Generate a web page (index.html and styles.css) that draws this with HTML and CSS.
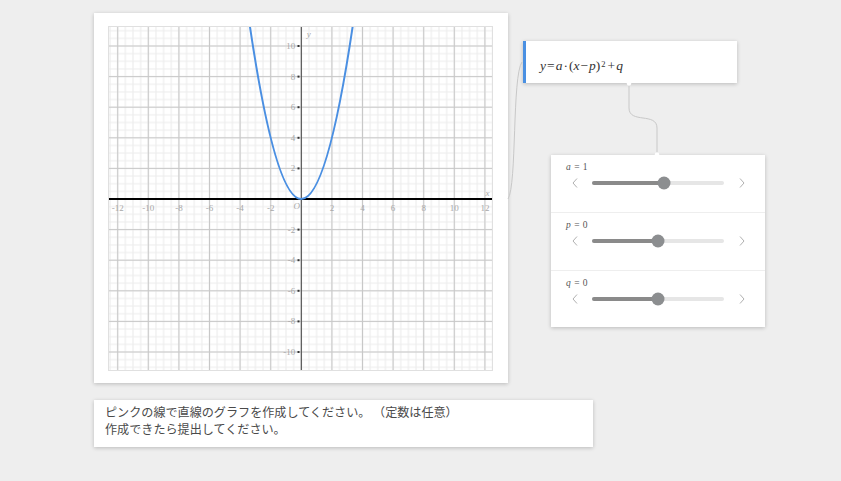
FILE: index.html
```html
<!DOCTYPE html>
<html lang="ja">
<head>
<meta charset="utf-8">
<title>Graph</title>
<link rel="stylesheet" href="styles.css">
</head>
<body>
<div class="page">
  <div class="card graph-card">
    <svg class="graph" width="385" height="345" viewBox="0 0 385 345">
      <defs>
        <pattern id="minor" patternUnits="userSpaceOnUse" x="-0.25" y="-0.25" width="0.5" height="0.5">
          <path d="M0.25 0V0.5M0 0.25H0.5" stroke="#ececec" stroke-width="0.07" fill="none"/>
        </pattern>
        <pattern id="major" patternUnits="userSpaceOnUse" x="-1" y="-1" width="2" height="2">
          <path d="M1 0V2M0 1H2" stroke="#c8c8c8" stroke-width="0.07" fill="none"/>
        </pattern>
      </defs>
      <g transform="translate(193.3 173) scale(15.3 -15.3)">
        <rect x="-13" y="-12" width="26" height="24" fill="url(#minor)"/>
        <rect x="-13" y="-12" width="26" height="24" fill="url(#major)"/>
      </g>
      <line x1="193.3" y1="0" x2="193.3" y2="345" stroke="#444" stroke-width="1"/>
      <line x1="0" y1="173" x2="385" y2="173" stroke="#000" stroke-width="2"/>
      <g fill="#333">
        <rect x="189.5" y="19" width="2" height="2"/>
        <rect x="189.5" y="49.6" width="2" height="2"/>
        <rect x="189.5" y="80.2" width="2" height="2"/>
        <rect x="189.5" y="110.8" width="2" height="2"/>
        <rect x="189.5" y="141.4" width="2" height="2"/>
        <rect x="189.5" y="202.6" width="2" height="2"/>
        <rect x="189.5" y="233.2" width="2" height="2"/>
        <rect x="189.5" y="263.8" width="2" height="2"/>
        <rect x="189.5" y="294.4" width="2" height="2"/>
        <rect x="189.5" y="325" width="2" height="2"/>
      </g>
      <g class="ticks" text-anchor="middle">
        <text x="9.7" y="184.5">-12</text>
        <text x="40.3" y="184.5">-10</text>
        <text x="70.9" y="184.5">-8</text>
        <text x="101.5" y="184.5">-6</text>
        <text x="132.1" y="184.5">-4</text>
        <text x="162.7" y="184.5">-2</text>
        <text x="223.9" y="184.5">2</text>
        <text x="254.5" y="184.5">4</text>
        <text x="285.1" y="184.5">6</text>
        <text x="315.7" y="184.5">8</text>
        <text x="346.3" y="184.5">10</text>
        <text x="376.9" y="184.5">12</text>
      </g>
      <g class="ticks" text-anchor="end">
        <text x="187.3" y="23">10</text>
        <text x="187.3" y="53.6">8</text>
        <text x="187.3" y="84.2">6</text>
        <text x="187.3" y="114.8">4</text>
        <text x="187.3" y="145.4">2</text>
        <text x="187.3" y="206.6">-2</text>
        <text x="187.3" y="237.2">-4</text>
        <text x="187.3" y="267.8">-6</text>
        <text x="187.3" y="298.4">-8</text>
        <text x="187.3" y="329">-10</text>
      </g>
      <g class="ticks axis-name">
        <text x="185.5" y="182.5">O</text>
        <text x="377.5" y="169.5">x</text>
        <text x="198.8" y="10.5">y</text>
      </g>
      <path d="M141.28 -3.87 Q193.3 349.87 245.32 -3.87" fill="none" stroke="#4a8fe2" stroke-width="2"/>
    </svg>
  </div>

  <div class="right">
    <div class="card formula">
      <span class="v">y</span><span class="op">=</span><span class="v">a</span><span class="op">·</span>(<span class="v">x</span><span class="op">−</span><span class="v">p</span>)<sup>2</sup><span class="op">+</span><span class="v">q</span>
    </div>
    <div class="card sliders">
      <div class="row">
        <div class="label"><span class="v">a</span> = 1</div>
        <div class="slider">
          <svg class="chev" viewBox="0 0 8 10"><path d="M6 0.5L2 5L6 9.5" /></svg>
          <div class="track"><div class="fill" style="width:54.5%"></div><div class="thumb" style="left:54.5%"></div></div>
          <svg class="chev" viewBox="0 0 8 10"><path d="M2 0.5L6 5L2 9.5" /></svg>
        </div>
      </div>
      <div class="row">
        <div class="label"><span class="v">p</span> = 0</div>
        <div class="slider">
          <svg class="chev" viewBox="0 0 8 10"><path d="M6 0.5L2 5L6 9.5" /></svg>
          <div class="track"><div class="fill" style="width:50.2%"></div><div class="thumb" style="left:50.2%"></div></div>
          <svg class="chev" viewBox="0 0 8 10"><path d="M2 0.5L6 5L2 9.5" /></svg>
        </div>
      </div>
      <div class="row">
        <div class="label"><span class="v">q</span> = 0</div>
        <div class="slider">
          <svg class="chev" viewBox="0 0 8 10"><path d="M6 0.5L2 5L6 9.5" /></svg>
          <div class="track"><div class="fill" style="width:50.2%"></div><div class="thumb" style="left:50.2%"></div></div>
          <svg class="chev" viewBox="0 0 8 10"><path d="M2 0.5L6 5L2 9.5" /></svg>
        </div>
      </div>
    </div>
  </div>

  <div class="card note">
    <p>ピンクの線で直線のグラフを作成してください。 （定数は任意）</p>
    <p>作成できたら提出してください。</p>
  </div>

  <svg class="links" width="841" height="481" viewBox="0 0 841 481">
    <path d="M508 199C517 185 512 76 522 62" />
    <path d="M629 84L629 108C629 124 657 112 657 128L657 155" />
    <circle cx="629" cy="83.5" r="2.2"/>
    <circle cx="657" cy="154.5" r="2.2"/>
  </svg>
</div>
</body>
</html>
```

FILE: styles.css
```css
html, body {
  margin: 0;
  padding: 0;
}

body {
  background: #eeeeee;
  font-family: "Liberation Serif", "Times New Roman", serif;
}

.page {
  position: relative;
  box-sizing: border-box;
  width: 841px;
  height: 481px;
  padding: 13px 0 0 94px;
  display: grid;
  grid-template-columns: 414px 257px;
  grid-template-rows: 370px auto;
  row-gap: 17px;
  align-items: start;
}

.card {
  background: #ffffff;
  box-shadow: 0 1px 4px rgba(0, 0, 0, 0.22);
}

.graph-card {
  box-sizing: border-box;
  width: 414px;
  height: 370px;
  padding: 13px 15px 12px 14px;
}

.graph {
  display: block;
  width: 385px;
  height: 345px;
  outline: 1px solid #e0e0e0;
  outline-offset: -1px;
}

.ticks text {
  font-family: "Liberation Serif", serif;
  font-size: 9px;
  fill: #a8a8a8;
}

.axis-name text {
  font-style: italic;
}

.right {
  padding: 28px 0 0 15px;
  display: flex;
  flex-direction: column;
  align-items: flex-start;
}

.formula {
  box-sizing: border-box;
  width: 214px;
  height: 42px;
  border-left: 3px solid #4a90e2;
  padding: 8px 0 0 14px;
  display: flex;
  align-items: center;
  font-size: 13.5px;
  color: #333;
  white-space: nowrap;
}

.formula .v,
.label .v {
  font-style: italic;
}

.formula .op {
  padding: 0 1px;
}

.formula sup {
  font-size: 8.5px;
  position: relative;
  top: -2px;
  padding: 0 1px;
}

.sliders {
  margin: 72px 0 0 28px;
  width: 214px;
  height: 172px;
}

.row {
  box-sizing: border-box;
  height: 58px;
  padding-top: 6px;
  border-bottom: 1px solid #eeeeee;
}

.row:last-child {
  height: 56px;
  border-bottom: none;
}

.label {
  padding-left: 15px;
  font-size: 9.5px;
  line-height: 12px;
  color: #555;
  word-spacing: 1px;
}

.slider {
  display: flex;
  align-items: center;
  height: 14px;
  margin-top: 3px;
  padding-left: 20px;
}

.chev {
  display: block;
  width: 8px;
  height: 10px;
  flex: none;
}

.chev path {
  fill: none;
  stroke: #b0b0b0;
  stroke-width: 1;
}

.track {
  position: relative;
  width: 132px;
  height: 4px;
  margin: 0 14px 0 13px;
  background: #e6e6e6;
  border-radius: 2px;
  flex: none;
}

.fill {
  position: absolute;
  left: 0;
  top: 0;
  height: 100%;
  background: #8a8a8a;
  border-radius: 2px;
}

.thumb {
  position: absolute;
  top: 50%;
  width: 13px;
  height: 13px;
  border-radius: 50%;
  background: #8c8e90;
  transform: translate(-50%, -50%);
}

.note {
  grid-column: 1 / 3;
  box-sizing: border-box;
  width: 499px;
  padding: 4px 10px 10px 11px;
  font-family: "Noto Sans CJK JP", "Noto Sans", sans-serif;
  font-size: 12.1px;
  line-height: 16.5px;
  color: #4a4a4a;
}

.note p {
  margin: 0;
}

.links {
  position: absolute;
  left: 0;
  top: 0;
  pointer-events: none;
}

.links path {
  fill: none;
  stroke: #c8c8c8;
  stroke-width: 1;
}

.links circle {
  fill: #ffffff;
}
```
